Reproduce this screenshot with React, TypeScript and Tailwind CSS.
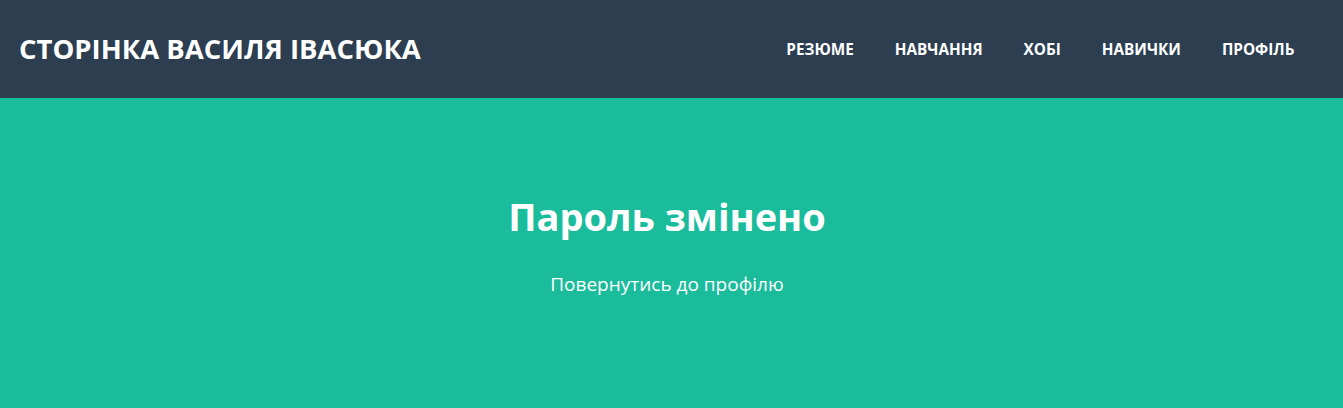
export default function App() {
  const links = ["Резюме", "Навчання", "Хобі", "Навички", "Профіль"];

  return (
    <div className="min-h-[408px] bg-[#1abc9c] font-['Open_Sans',sans-serif] text-white">
      <nav className="flex h-[98px] items-center justify-between bg-[#2c3e50] pl-[19px] pr-[28px]">
        <a href="#" className="text-[27.5px] font-bold uppercase">
          Сторінка Василя Івасюка
        </a>
        <ul className="flex items-center">
          {links.map((l) => (
            <li key={l}>
              <a href="#" className="block px-[20.5px] py-2 text-[15.3px] font-bold uppercase">
                {l}
              </a>
            </li>
          ))}
        </ul>
      </nav>
      <section className="flex flex-col items-center pt-[96px] pb-[100px] pr-[9px] text-center">
        <h1 className="text-[38px] font-bold leading-[1.2]">Пароль змінено</h1>
        <a href="#" className="mt-[30px] text-[19px]">
          Повернутись до профілю
        </a>
      </section>
    </div>
  );
}
